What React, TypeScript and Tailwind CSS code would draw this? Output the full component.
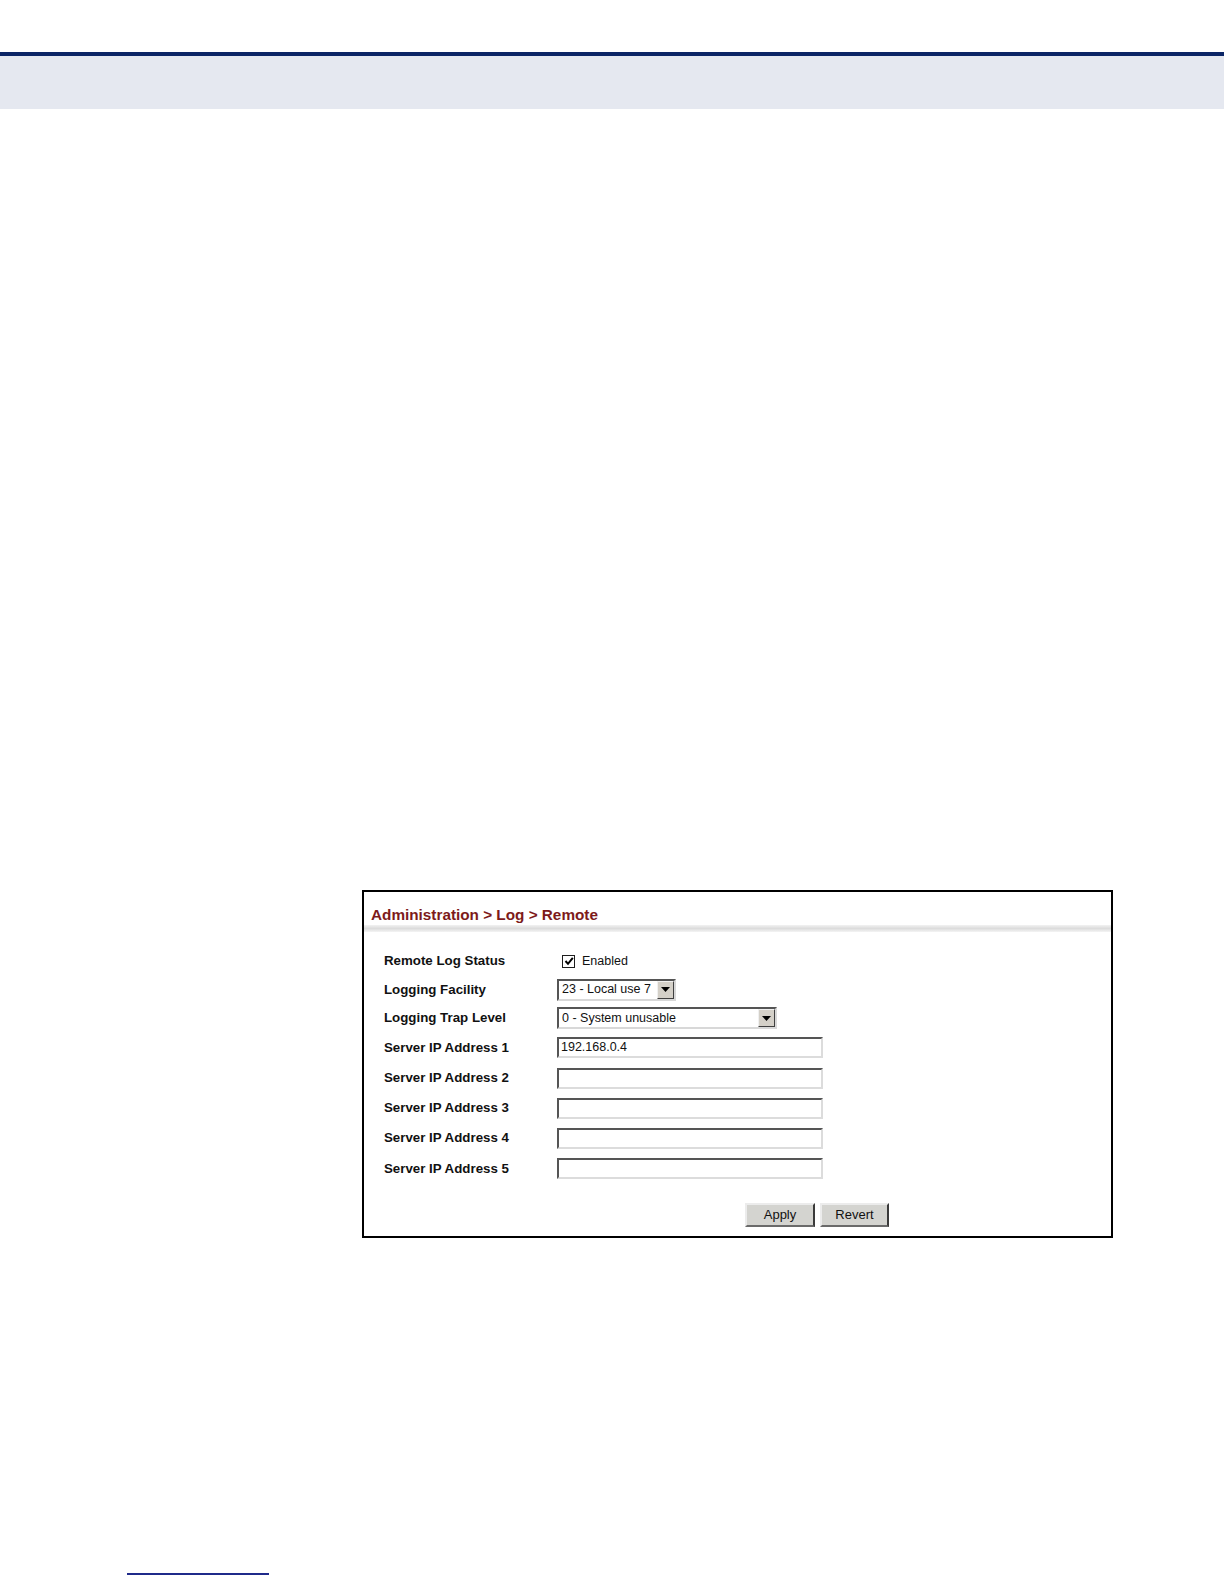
import React from "react";

function Arrow() {
  return (
    <div className="w-[17px] h-[18px] bg-[#d4d0c8] border border-t-[#f0f0f0] border-l-[#f0f0f0] border-r-[#404040] border-b-[#404040] flex items-center justify-center">
      <svg width="9" height="5" viewBox="0 0 9 5">
        <polygon points="0,0 9,0 4.5,5" fill="#000" />
      </svg>
    </div>
  );
}

function Select({ text, width }: { text: string; width: string }) {
  return (
    <div
      className={`${width} h-[22px] border-2 border-t-[#555] border-l-[#555] border-r-[#d8d8d8] border-b-[#d8d8d8] bg-white flex items-center justify-between pl-[3px]`}
    >
      <span className="text-[12.5px] text-[#111] leading-none whitespace-nowrap">{text}</span>
      <Arrow />
    </div>
  );
}

function TextInput({ value }: { value?: string }) {
  return (
    <div className="w-[266px] h-[21px] border-2 border-t-[#555] border-l-[#555] border-r-[#dcdcdc] border-b-[#dcdcdc] bg-white flex items-center pl-[2px]">
      <span className="text-[12.5px] text-[#111] leading-none">{value}</span>
    </div>
  );
}

function Row({ label, h, children }: { label: string; h: string; children: React.ReactNode }) {
  return (
    <div className={`flex items-center ${h}`}>
      <div className="w-[173px] text-[13.3px] font-bold text-[#111] leading-none whitespace-nowrap">{label}</div>
      <div className="flex items-center">{children}</div>
    </div>
  );
}

function Button({ label, w }: { label: string; w: string }) {
  return (
    <div
      className={`${w} h-[24px] bg-[#d4d4d0] border-2 border-t-[#ececec] border-l-[#ececec] border-r-[#3a3a3a] border-b-[#6a6a6a] flex items-center justify-center text-[13px] text-[#111]`}
    >
      {label}
    </div>
  );
}

export default function App() {
  return (
    <div
      className="w-[1224px] h-[1584px] bg-white overflow-hidden flex flex-col"
      style={{ fontFamily: '"Liberation Sans", Arial, sans-serif' }}
    >
      <div className="h-[52px] shrink-0" />
      <div className="h-[4px] shrink-0 bg-[#0b2566]" />
      <div className="h-[53px] shrink-0 bg-[#e5e8f0]" />

      <div className="mt-[781px] ml-[362px] w-[751px] h-[348px] shrink-0 border-2 border-black flex flex-col">
        <div className="pl-[7px] pt-[13px] h-[33px]">
          <div className="text-[15.3px] font-bold text-[#7d1a1a] leading-[20px] whitespace-nowrap">
            Administration &gt; Log &gt; Remote
          </div>
        </div>
        <div className="h-[7px] bg-gradient-to-b from-[#f2f2f2] via-[#dcdcdc] to-[#f4f4f4]" />

        <div className="pl-[20px] mt-[15px] flex flex-col">
          <Row label="Remote Log Status" h="h-[28px]">
            <div className="ml-[5px] w-[13px] h-[13px] border border-[#1e1e1e] bg-white flex items-center justify-center">
              <svg width="10" height="10" viewBox="0 0 10 10">
                <path d="M1.5 5 L4 7.8 L8.8 1.8" fill="none" stroke="#000" strokeWidth="2" />
              </svg>
            </div>
            <span className="ml-[7px] text-[12.5px] text-[#111] leading-none">Enabled</span>
          </Row>
          <Row label="Logging Facility" h="h-[29px]">
            <Select text="23 - Local use 7" width="w-[119px]" />
          </Row>
          <Row label="Logging Trap Level" h="h-[28px]">
            <Select text="0 - System unusable" width="w-[220px]" />
          </Row>
          <Row label="Server IP Address 1" h="h-[31px]">
            <TextInput value="192.168.0.4" />
          </Row>
          <Row label="Server IP Address 2" h="h-[30px]">
            <TextInput />
          </Row>
          <Row label="Server IP Address 3" h="h-[30px]">
            <TextInput />
          </Row>
          <Row label="Server IP Address 4" h="h-[30px]">
            <TextInput />
          </Row>
          <Row label="Server IP Address 5" h="h-[31px]">
            <TextInput />
          </Row>
        </div>

        <div className="mt-[19px] pl-[381px] flex gap-[5px]">
          <Button label="Apply" w="w-[70px]" />
          <Button label="Revert" w="w-[69px]" />
        </div>
      </div>

      <div className="mt-[335px] ml-[127px] w-[142px] h-[2px] shrink-0 bg-[#1f2a8a]" />
    </div>
  );
}
